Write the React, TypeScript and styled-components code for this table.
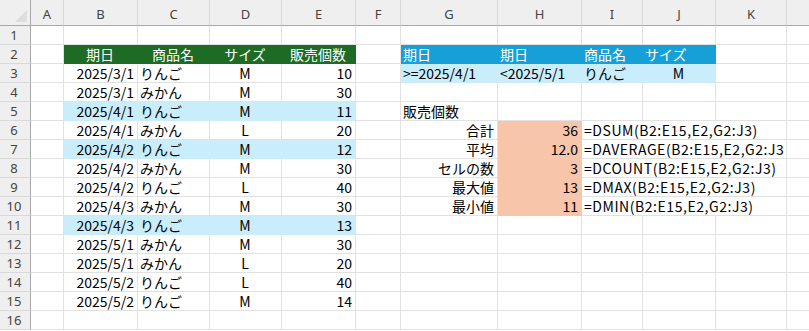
import React from "react";
import styled, { createGlobalStyle } from "styled-components";

// 엑셀 시트 화면: 열 너비, 행 높이는 스크린샷 기준(px)
const COLS = ["A", "B", "C", "D", "E", "F", "G", "H", "I", "J", "K", "L"];
const WIDTHS = [33, 74, 72, 72, 74, 45, 97, 84, 61, 73, 71, 60];

const GREEN = "#1d6b24";
const BLUE = "#17a0d8";
const LIGHT = "#caedfb";
const SALMON = "#f7c6aa";

type Align = "left" | "center" | "right";

interface CellDef {
  v?: string;
  align?: Align;
  fill?: string;
  color?: string;
  span?: number;
  wide?: boolean;
}

type RowDef = Record<string, CellDef>;

const GlobalStyle = createGlobalStyle`
  html, body {
    margin: 0;
    padding: 0;
    background: #ffffff;
    overflow: hidden;
  }
  body {
    font-family: "Noto Sans CJK JP", "Noto Sans", sans-serif;
  }
`;

const header = (v: string, fill: string, align: Align): CellDef => ({
  v,
  fill,
  color: "#ffffff",
  align,
});

const dataRow = (
  date: string,
  item: string,
  size: string,
  qty: string,
  hi?: boolean
): RowDef => {
  const fill = hi ? LIGHT : undefined;
  return {
    B: { v: date, align: "right", fill },
    C: { v: item, align: "left", fill },
    D: { v: size, align: "center", fill },
    E: { v: qty, align: "right", fill },
  };
};

const statRow = (label: string, value: string, formula: string): RowDef => ({
  G: { v: label, align: "right" },
  H: { v: value, align: "right", fill: SALMON },
  I: { v: formula, align: "left", span: 3, wide: true },
});

const ROWS: RowDef[] = [
  {},
  {
    B: header("期日", GREEN, "center"),
    C: header("商品名", GREEN, "center"),
    D: header("サイズ", GREEN, "center"),
    E: header("販売個数", GREEN, "center"),
    G: header("期日", BLUE, "left"),
    H: header("期日", BLUE, "left"),
    I: header("商品名", BLUE, "left"),
    J: header("サイズ", BLUE, "left"),
  },
  {
    ...dataRow("2025/3/1", "りんご", "M", "10"),
    G: { v: ">=2025/4/1", align: "left", fill: LIGHT },
    H: { v: "<2025/5/1", align: "left", fill: LIGHT },
    I: { v: "りんご", align: "left", fill: LIGHT },
    J: { v: "M", align: "center", fill: LIGHT },
  },
  {
    ...dataRow("2025/3/1", "みかん", "M", "30"),
  },
  {
    ...dataRow("2025/4/1", "りんご", "M", "11", true),
    G: { v: "販売個数", align: "left" },
  },
  {
    ...dataRow("2025/4/1", "みかん", "L", "20"),
    ...statRow("合計", "36", "=DSUM(B2:E15,E2,G2:J3)"),
  },
  {
    ...dataRow("2025/4/2", "りんご", "M", "12", true),
    ...statRow("平均", "12.0", "=DAVERAGE(B2:E15,E2,G2:J3"),
  },
  {
    ...dataRow("2025/4/2", "みかん", "M", "30"),
    ...statRow("セルの数", "3", "=DCOUNT(B2:E15,E2,G2:J3)"),
  },
  {
    ...dataRow("2025/4/2", "りんご", "L", "40"),
    ...statRow("最大値", "13", "=DMAX(B2:E15,E2,G2:J3)"),
  },
  {
    ...dataRow("2025/4/3", "みかん", "M", "30"),
    ...statRow("最小値", "11", "=DMIN(B2:E15,E2,G2:J3)"),
  },
  dataRow("2025/4/3", "りんご", "M", "13", true),
  dataRow("2025/5/1", "みかん", "M", "30"),
  dataRow("2025/5/1", "みかん", "L", "20"),
  dataRow("2025/5/2", "りんご", "L", "40"),
  dataRow("2025/5/2", "りんご", "M", "14"),
  {},
];

const App = () => {
  return (
    <>
      <GlobalStyle />
      <Sheet>
        <Corner>
          <CornerMark />
        </Corner>
        {/* 마지막 열(L)은 화면 밖에 걸려서 글자가 보이지 않음 */}
        {COLS.map((c, i) => (
          <ColHead key={c}>{i < COLS.length - 1 ? c : ""}</ColHead>
        ))}
        {ROWS.map((row, r) => {
          const cells: React.ReactNode[] = [];
          let i = 0;
          while (i < COLS.length) {
            const def = row[COLS[i]] ?? {};
            const span = def.span ?? 1;
            cells.push(
              <Cell
                key={`${r}-${COLS[i]}`}
                $align={def.align ?? "left"}
                $fill={def.fill}
                $color={def.color}
                $span={span}
                $wide={def.wide}
              >
                {def.v}
              </Cell>
            );
            i += span;
          }
          return (
            <React.Fragment key={r}>
              <RowHead>{r + 1}</RowHead>
              {cells}
            </React.Fragment>
          );
        })}
      </Sheet>
    </>
  );
};

export default App;

const Sheet = styled.div`
  display: grid;
  grid-template-columns: 31px ${WIDTHS.map((w) => `${w}px`).join(" ")};
  grid-template-rows: 26px repeat(16, 19px);
  width: 809px;
  height: 331px;
  overflow: hidden;
  background: #ffffff;
`;

const Corner = styled.div`
  position: relative;
  box-sizing: border-box;
  background: #efefef;
  border-right: 1px solid #a9a9a9;
  border-bottom: 1px solid #a9a9a9;
`;

const CornerMark = styled.div`
  position: absolute;
  right: 3px;
  bottom: 3px;
  width: 0;
  height: 0;
  border-left: 12px solid transparent;
  border-bottom: 12px solid #dedede;
`;

const ColHead = styled.div`
  box-sizing: border-box;
  display: flex;
  align-items: center;
  justify-content: center;
  padding-top: 2px;
  background: #efefef;
  border-right: 1px solid #d9d9d9;
  border-bottom: 1px solid #a9a9a9;
  font-family: "Noto Sans", "Noto Sans CJK JP", sans-serif;
  font-size: 13px;
  color: #444444;
`;

const RowHead = styled.div`
  box-sizing: border-box;
  display: flex;
  align-items: center;
  justify-content: center;
  padding-right: 2px;
  background: #efefef;
  border-right: 1px solid #a9a9a9;
  border-bottom: 1px solid #d9d9d9;
  font-family: "Noto Sans", "Noto Sans CJK JP", sans-serif;
  font-size: 13px;
  color: #444444;
`;

const Cell = styled.div<{
  $align: Align;
  $fill?: string;
  $color?: string;
  $span: number;
  $wide?: boolean;
}>`
  grid-column: span ${(p) => p.$span};
  box-sizing: border-box;
  display: flex;
  align-items: center;
  justify-content: ${(p) =>
    p.$align === "right"
      ? "flex-end"
      : p.$align === "center"
      ? "center"
      : "flex-start"};
  padding: 0 3px 0 2px;
  overflow: hidden;
  white-space: nowrap;
  background: ${(p) => p.$fill ?? "#ffffff"};
  border-right: 1px solid ${(p) => p.$fill ?? "#e1e1e1"};
  border-bottom: 1px solid ${(p) => p.$fill ?? "#e1e1e1"};
  font-size: 14px;
  line-height: 18px;
  letter-spacing: ${(p) => (p.$wide ? "0.55px" : "0")};
  color: ${(p) => p.$color ?? "#000000"};
`;
